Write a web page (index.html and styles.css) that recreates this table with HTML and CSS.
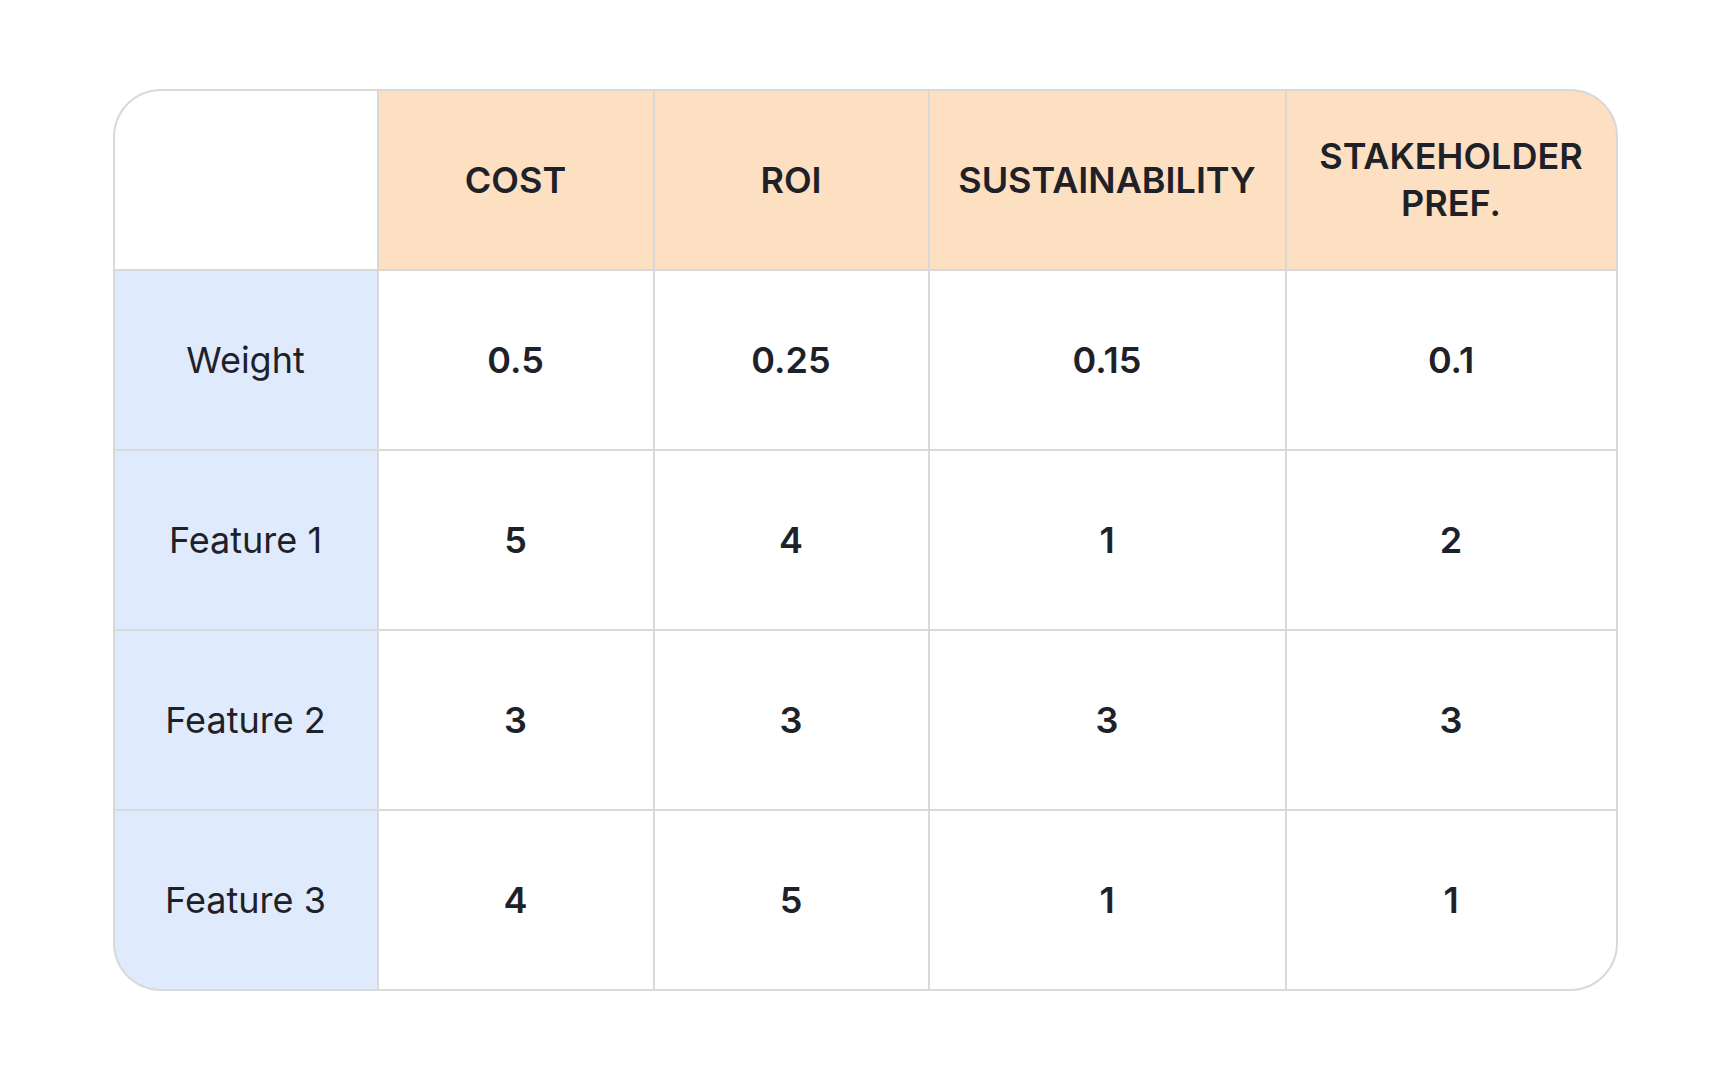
FILE: index.html
```html
<!DOCTYPE html>
<html>
<head>
<meta charset="utf-8">
<link rel="stylesheet" href="styles.css">
</head>
<body>
<div class="matrix">
  <div class="cell corner"></div>
  <div class="cell head">COST</div>
  <div class="cell head">ROI</div>
  <div class="cell head">SUSTAINABILITY</div>
  <div class="cell head">STAKEHOLDER<br>PREF.</div>

  <div class="cell label">Weight</div>
  <div class="cell val">0.5</div>
  <div class="cell val">0.25</div>
  <div class="cell val">0.15</div>
  <div class="cell val">0.1</div>

  <div class="cell label">Feature 1</div>
  <div class="cell val">5</div>
  <div class="cell val">4</div>
  <div class="cell val">1</div>
  <div class="cell val">2</div>

  <div class="cell label">Feature 2</div>
  <div class="cell val">3</div>
  <div class="cell val">3</div>
  <div class="cell val">3</div>
  <div class="cell val">3</div>

  <div class="cell label">Feature 3</div>
  <div class="cell val">4</div>
  <div class="cell val">5</div>
  <div class="cell val">1</div>
  <div class="cell val">1</div>
</div>
</body>
</html>
```

FILE: styles.css
```css
html, body {
  margin: 0;
  padding: 0;
  background: #ffffff;
}
body {
  width: 1728px;
  height: 1080px;
  display: flex;
  align-items: center;
  justify-content: center;
  font-family: Inter, "Noto Sans", sans-serif;
  color: #1f2128;
}
.matrix {
  box-sizing: border-box;
  width: 1505px;
  height: 902px;
  margin-left: 2px;
  border: 2px solid #d9d9d9;
  border-radius: 48px;
  overflow: hidden;
  background: #d9d9d9;
  display: grid;
  grid-template-columns: 262px 274px 273px 355px 329px;
  grid-template-rows: repeat(5, 1fr);
  gap: 2px;
}
.cell {
  display: flex;
  align-items: center;
  justify-content: center;
  text-align: center;
  background: #ffffff;
  font-size: 36px;
  line-height: 47px;
}
.corner {
  background: #ffffff;
}
.head {
  background: #fddfc2;
  font-weight: 600;
  letter-spacing: 0;
}
.label {
  background: #dfebfc;
  font-weight: 400;
}
.val {
  font-weight: 600;
}
```
